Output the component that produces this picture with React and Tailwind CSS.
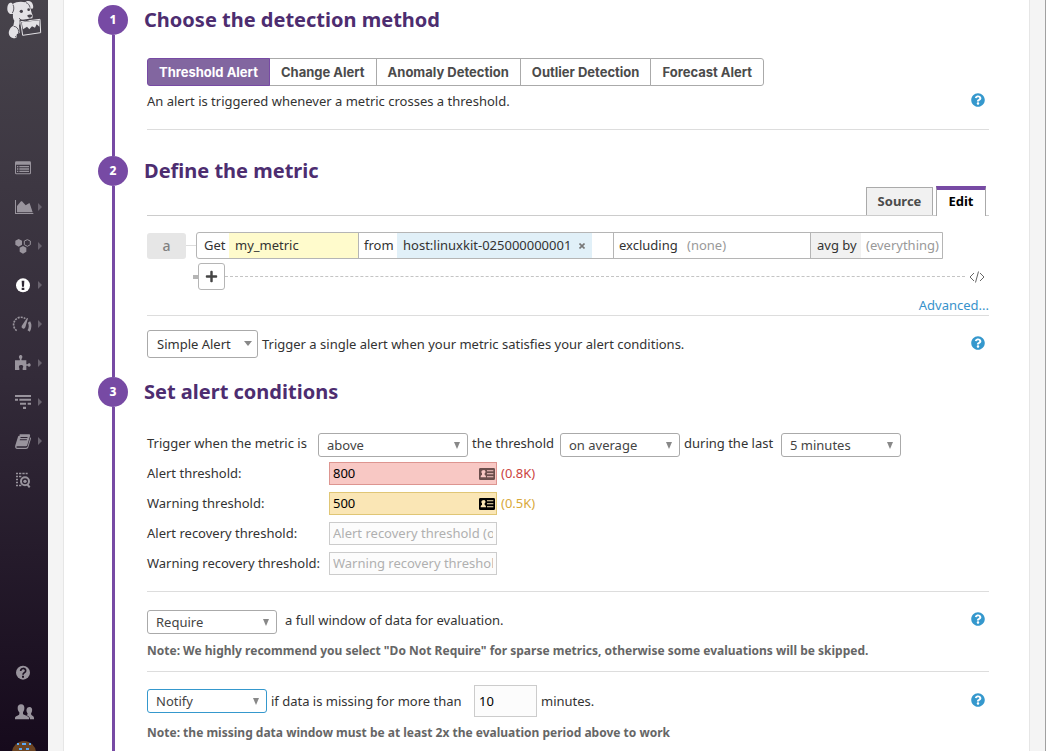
import React from "react";
import { FaPlus, FaQuestionCircle } from "react-icons/fa";

function NavSvg({ children }) {
  return (
    <svg viewBox="0 0 72 60" className="h-5 w-6 shrink-0" fill="currentColor" aria-hidden="true">
      {children}
    </svg>
  );
}

const DogLogo = () => (
  <svg viewBox="0 0 108 117" className="h-[39px] w-9" fill="#e3e1e5" aria-hidden="true">
    <path d="M20 12C30 5 46 4 58 7c3-5 12-6 18-1 5 6 7 14 5 19-3 3-6 0-8-2l4 16c3 5 4 11 2 16l-39 6c2 7 1 12-1 16l2 22-9 4c4 10-4 14-12 11C9 111 6 99 10 91c2-7 7-11 12-14l3-15c-4-5-5-13-4-21-6 3-12 1-15-6C2 28 4 12 11 9c4-2 7 0 9 3z" />
    <path d="M21 14c4 8 3 18-2 25M60 8c7 2 11 8 12 15" fill="none" stroke="#45414a" strokeWidth="2.500" />
    <path d="M44 65l58-7 2 40-54 8z" fill="#45414a" stroke="#e3e1e5" strokeWidth="3" />
    <path d="M47 67l53-6v19l-8-7-5 10-9-4-8 9-7-8-12 8z" />
    <circle cx="46" cy="34" r="5" fill="#45414a" />
    <circle cx="68" cy="29" r="4" fill="#45414a" />
    <path d="M64 46c4-3 11-4 14-1 1 5-3 8-7 8-4 0-7-3-7-7z" fill="#45414a" />
    <path d="M39 55c8 8 22 10 33 2" fill="none" stroke="#45414a" strokeWidth="3" />
    <path d="M23 79c9 0 15 8 15 16s-5 14-11 16" fill="none" stroke="#45414a" strokeWidth="2.500" />
  </svg>
);

const EventsIcon = () => (
  <NavSvg>
    <path fillRule="evenodd" d="M13 10h40a4 4 0 0 1 4 4v31a4 4 0 0 1-4 4H13a4 4 0 0 1-4-4V14a4 4 0 0 1 4-4zm-1 10v24a2 2 0 0 0 2 2h38a2 2 0 0 0 2-2V20z" />
    <path d="M15 24h4v4h-4zM22 24h29v4H22zM15 31h4v4h-4zM22 31h29v4H22zM15 38h4v4h-4zM22 38h29v4H22z" />
  </NavSvg>
);

const DashboardsIcon = () => (
  <NavSvg>
    <path d="M9 9h3v39h52v3H9z" />
    <path d="M15 46V27l12-14h3l11 12 10-6h2l9 27z" />
  </NavSvg>
);

const InfrastructureIcon = () => (
  <NavSvg>
    <path d="M20 9l10 5v12l-10 6-10-6V14zM33 30l10 5v12l-10 6-10-6V35z" />
    <path d="M46 11l9 4v11l-9 5-9-5V15z" fill="none" stroke="currentColor" strokeWidth="3" />
  </NavSvg>
);

const MonitorsIcon = () => (
  <NavSvg>
    <circle cx="33" cy="31" r="21" fill="#fff" />
    <path d="M29 17h8l-1 18h-6zM29 38h8v7h-8z" fill="#2e2733" />
  </NavSvg>
);

const MetricsIcon = () => (
  <NavSvg>
    <path d="M14 50a21 21 0 0 1 26-36" fill="none" stroke="currentColor" strokeWidth="5" strokeDasharray="6 3" />
    <path d="M51 24c5 9 4 18-1 27" fill="none" stroke="currentColor" strokeWidth="8" />
    <path d="M45 12l3 1-8 27a5 5 0 0 1-11-4z" />
  </NavSvg>
);

const IntegrationsIcon = () => (
  <NavSvg>
    <path d="M9 22h14c1-2 1-3 0-5-4-4-2-11 3-11s7 7 3 11c-1 2-1 3 0 5h14v12h4c2-5 9-4 9 2s-7 7-9 2h-4v13H32v-5c4-6 1-10-5-10s-8 4-5 10v5H9z" />
  </NavSvg>
);

const ApmIcon = () => (
  <NavSvg>
    <path d="M9 9h48v6H9zM9 20h9v6H9zM22 20h35v6H22zM24 32h18v6H24zM47 32h10v6H47zM33 44h9v7h-9z" />
  </NavSvg>
);

const NotebooksIcon = () => (
  <NavSvg>
    <path fillRule="evenodd" d="M23 10h27c4 0 5 2 4 5l-8 27c-1 3-3 4-6 4H16c-4 0-4 4-1 4h27c3 0 4-1 5-4l8-27c3 2 2 4 1 7l-7 23c-1 4-3 5-7 5H16c-6 0-8-5-6-11l8-26c1-2 2-3 5-3zm3 8-1 3h21l1-3zm-2 7-1 3h21l1-3z" />
  </NavSvg>
);

const LogsIcon = () => (
  <NavSvg>
    <path d="M12 8h6v5h-6zM21 8h7v5h-7zM31 8h7v5h-7zM41 8h6v5h-6zM12 17h6v5h-6zM21 17h7v5h-7zM12 26h6v5h-6zM12 35h6v5h-6zM12 44h6v5h-6zM21 44h7v5h-7z" />
    <circle cx="39" cy="34" r="12" fill="none" stroke="currentColor" strokeWidth="6" />
    <circle cx="39" cy="34" r="5" />
    <path d="M46 43l7 9" fill="none" stroke="currentColor" strokeWidth="6" />
  </NavSvg>
);

const HelpNavIcon = () => (
  <NavSvg>
    <circle cx="33" cy="29" r="21" />
    <path d="M26 24c0-10 15-10 15-1 0 6-8 6-8 12" fill="none" stroke="#1c1122" strokeWidth="5" />
    <path d="M30 38h6v6h-6z" fill="#1c1122" />
  </NavSvg>
);

const TeamIcon = () => (
  <NavSvg>
    <path d="M27 7c8 0 11 6 10 14-1 5-3 8-4 10v5c1 3 16 5 18 11v5H9v-5c2-5 13-7 13-11v-5c-3-3-5-7-5-13 0-7 4-11 10-11z" />
    <path d="M52 15c7 0 10 6 8 13-1 4-3 6-3 8 1 5 9 5 9 12v4H54c0-7-5-10-11-12 4-3 5-4 3-7-5-8-2-18 6-18z" />
  </NavSvg>
);

const NAV = [
  { label: "Events", Icon: EventsIcon },
  { label: "Dashboards", Icon: DashboardsIcon, sub: true },
  { label: "Infrastructure", Icon: InfrastructureIcon, sub: true },
  { label: "Monitors", Icon: MonitorsIcon, sub: true },
  { label: "Metrics", Icon: MetricsIcon, sub: true },
  { label: "Integrations", Icon: IntegrationsIcon, sub: true },
  { label: "APM", Icon: ApmIcon, sub: true },
  { label: "Notebooks", Icon: NotebooksIcon, sub: true },
  { label: "Logs", Icon: LogsIcon },
];

function NavLink({ label, Icon, sub }) {
  return (
    <a href="#" aria-label={label} className="flex h-[39px] items-center gap-[2px] pl-3 text-[#99949d]">
      <Icon />
      {sub && (
        <svg viewBox="0 0 4 8" className="h-2 w-1 shrink-0" fill="#69636e" aria-hidden="true">
          <path d="M0 0l4 4-4 4z" />
        </svg>
      )}
    </a>
  );
}

function Sidebar() {
  return (
    <nav className="sticky top-0 flex h-screen w-12 shrink-0 flex-col overflow-hidden bg-linear-to-b from-[#47434b] via-[#332b39] to-[#160a1c]">
      <a href="#" aria-label="Home" className="flex h-[148px] shrink-0 items-start justify-center">
        <DogLogo />
      </a>
      {NAV.map((item) => (
        <NavLink key={item.label} {...item} />
      ))}
      <div className="mt-auto shrink-0">
        <NavLink label="Help" Icon={HelpNavIcon} />
        <NavLink label="Team" Icon={TeamIcon} />
        <a href="#" aria-label="Account" className="flex h-5 items-start overflow-hidden pt-[10px] pl-3">
          <svg viewBox="0 0 24 24" className="h-6 w-6 shrink-0" aria-hidden="true">
            <circle cx="12" cy="12" r="12" fill="#6b4423" />
            <path d="M5 2h2v2H5zM10 2h4v2h-4zM17 2h2v2h-2zM7 7h3v2H7zM14 7h3v2h-3z" fill="#5aa9f5" />
          </svg>
        </a>
      </div>
    </nav>
  );
}

function Step({ number, title, last, children }) {
  return (
    <section className={last ? "flex grow" : "flex"}>
      <div className="flex w-[30px] shrink-0 flex-col items-center">
        <span className="flex size-[30px] shrink-0 items-center justify-center rounded-full bg-[#774aa4] text-[12px] font-extrabold text-white">
          {number}
        </span>
        <span className="w-[3px] grow bg-[#774aa4]" />
      </div>
      <div className="min-w-0 grow">
        <h2 className="pl-4 text-[20px] leading-[30px] font-bold text-[#4d2d70]">{title}</h2>
        <div className="pl-[19px]">{children}</div>
      </div>
    </section>
  );
}

function Help() {
  return (
    <button type="button" aria-label="Help" className="mr-1 ml-auto flex h-5 shrink-0 items-center pb-[2px] text-[#3598cd]">
      <FaQuestionCircle className="size-[14px]" />
    </button>
  );
}

function SelectBox({ label, value, className }) {
  return (
    <span className={`relative inline-flex h-6 shrink-0 ${className}`}>
      <select
        aria-label={label}
        className="h-full w-full appearance-none rounded-[3px] border border-inherit bg-white pr-5 pl-2 text-[13px] leading-5 text-[#444] outline-none"
      >
        <option>{value}</option>
      </select>
      <svg viewBox="0 0 6 7" className="pointer-events-none absolute top-[9px] right-2 h-[7px] w-[6px]" fill="#888" aria-hidden="true">
        <path d="M0 0h6L3 7z" />
      </svg>
    </span>
  );
}

function CardIcon({ className }) {
  return (
    <svg viewBox="0 0 48 36" className={`pointer-events-none absolute top-[6px] right-[2px] h-3 w-4 ${className}`} fill="currentColor" aria-hidden="true">
      <path
        fillRule="evenodd"
        d="M4 0h40a4 4 0 0 1 4 4v28a4 4 0 0 1-4 4H4a4 4 0 0 1-4-4V4a4 4 0 0 1 4-4zm8 7a5 5 0 0 0-3 9v5c-3 1-4 3-4 7h16c0-4-1-6-4-7v-5a5 5 0 0 0-5-9zm12 0v3h19V7zm0 9v3h19v-3zm0 9v3h19v-3z"
      />
    </svg>
  );
}

function ThresholdRow({ id, label, value, placeholder, inputClass, iconClass, note, noteClass }) {
  return (
    <div className="flex h-[30px] items-center">
      <label htmlFor={id} className="w-[182px] shrink-0 whitespace-nowrap">
        {label}
      </label>
      <span className="relative flex">
        <input
          id={id}
          type="text"
          defaultValue={value}
          placeholder={placeholder}
          className={`h-[23px] w-[168px] border px-[3px] text-[13px] outline-none placeholder:text-[#b0b0b0] ${inputClass}`}
        />
        {iconClass && <CardIcon className={iconClass} />}
      </span>
      {note && <span className={`ml-1 ${noteClass}`}>{note}</span>}
    </div>
  );
}

const METHODS = ["Threshold Alert", "Change Alert", "Anomaly Detection", "Outlier Detection", "Forecast Alert"];

function MethodPicker() {
  return (
    <div className="mt-[23px] flex h-7 font-[Inter,sans-serif] text-[13px] font-bold whitespace-nowrap">
      {METHODS.map((m, i) => (
        <button
          key={m}
          type="button"
          aria-pressed={i === 0}
          className={
            i === 0
              ? "z-10 rounded-l-[3px] border border-[#774aa4] bg-[#8266a0] px-[11px] text-white"
              : "-ml-px border border-[#aaa] bg-white px-[11px] text-[#4b4b4b] last:rounded-r-[3px]"
          }
        >
          {m}
        </button>
      ))}
    </div>
  );
}

function QueryEditor() {
  return (
    <div className="mt-4 flex items-center">
      <span className="flex h-[26px] w-[39px] shrink-0 items-center justify-center rounded-[3px] bg-[#e6e6e6] text-[14px] font-medium text-[#808080]">a</span>
      <span className="h-px w-[10px] shrink-0 bg-[#ddd]" />
      <div className="flex h-[27px] shrink-0 rounded-l-[3px] border border-[#b5b5b5] leading-[25px] whitespace-nowrap">
        <label htmlFor="metric" className="w-8 pl-[7px]">Get</label>
        <input id="metric" type="text" defaultValue="my_metric" className="w-[130px] border-r border-[#b5b5b5] bg-[#fffbcc] px-[6px] outline-none" />
        <span className="w-[38px] pl-[5px]">from</span>
        <span className="flex w-[195px] items-center bg-[#e1f0f8] pl-[6px]">
          host:linuxkit-025000000001
          <button type="button" aria-label="Remove host" className="ml-2 text-[#777]">
            <svg viewBox="0 0 6 6" className="size-[6px]" aria-hidden="true">
              <path d="M0.500 0.500l5 5M5.500 0.500l-5 5" stroke="currentColor" strokeWidth="1.600" />
            </svg>
          </button>
        </span>
        <span className="w-[22px] border-r border-[#b5b5b5]" />
        <label htmlFor="excluding" className="w-[67px] pl-[5px]">excluding</label>
        <input id="excluding" type="text" placeholder="(none)" className="w-[130px] border-r border-[#b5b5b5] px-[6px] outline-none placeholder:text-[#999]" />
        <label htmlFor="group" className="w-[50px] bg-[#f1f1f1] pl-[6px]">avg by</label>
        <input id="group" type="text" placeholder="(everything)" className="w-[81px] pl-[5px] outline-none placeholder:text-[#999]" />
      </div>
    </div>
  );
}

export default function App() {
  return (
    <div className="flex min-h-screen bg-[#f4f4f4] font-['Noto_Sans',sans-serif] text-[13px] leading-5 text-[#333]">
      <Sidebar />
      <div className="flex min-w-0 grow border-r border-[#a0a0a0] px-[15px]">
        <main className="flex min-w-0 grow flex-col border-x border-[#e6e6e6] bg-white pt-[5px] pr-10 pl-[34px]">
          <Step number="1" title="Choose the detection method">
            <MethodPicker />
            <div className="mt-[5px] flex">
              <p>An alert is triggered whenever a metric crosses a threshold.</p>
              <Help />
            </div>
            <hr className="mt-[18px] mb-[26px] border-[#ddd]" />
          </Step>

          <Step number="2" title="Define the metric">
            <div className="flex h-[30px] items-end justify-end gap-[3px] border-b border-[#ccc] pr-[3px] font-bold">
              <button type="button" className="h-7 w-[67px] border border-b-0 border-[#aaa] bg-[#f1f1f1] pb-[2px] text-[#4b4b4b]">
                Source
              </button>
              <button type="button" className="-mb-px h-[30px] w-[50px] border-x border-t-4 border-x-[#aaa] border-t-[#774aa4] bg-white pb-1 text-black">
                Edit
              </button>
            </div>
            <QueryEditor />
            <div className="mt-1 flex items-center pr-1 pl-[46px]">
              <span className="h-1 w-[5px] bg-[#b5b5b5]" />
              <button type="button" aria-label="Add query" className="flex size-[27px] items-center justify-center rounded-[3px] border border-[#b5b5b5] bg-white text-[#444]">
                <FaPlus className="size-[13px]" />
              </button>
              <span className="mr-1 grow border-t border-dashed border-[#c4c4c4]" />
              <button type="button" aria-label="Edit as code" className="text-[#666]">
                <svg viewBox="0 0 16 12" className="h-3 w-4" fill="none" stroke="currentColor" aria-hidden="true">
                  <path d="M5 2L1 6l4 4M11 2l4 4-4 4M9.500 0.500l-3 11" />
                </svg>
              </button>
            </div>
            <div className="mt-[5px] flex justify-end">
              <a href="#" className="text-[#3892cb]">Advanced...</a>
            </div>
            <hr className="border-[#ddd]" />
            <div className="mt-[14px] mb-[19px] flex h-7 items-center">
              <span className="relative mr-1 flex">
                <select aria-label="Alert grouping" className="h-7 w-[111px] appearance-none rounded-[3px] border border-[#aaa] bg-white pl-[9px] text-[13px] outline-none">
                  <option>Simple Alert</option>
                </select>
                <svg viewBox="0 0 8 5" className="pointer-events-none absolute top-[11px] right-[6px] h-[5px] w-2" fill="#888" aria-hidden="true">
                  <path d="M0 0h8L4 5z" />
                </svg>
              </span>
              <p>Trigger a single alert when your metric satisfies your alert conditions.</p>
              <Help />
            </div>
          </Step>

          <Step number="3" title="Set alert conditions" last>
            <div className="mt-[26px] flex items-start whitespace-nowrap">
              <span className="w-[171px]">Trigger when the metric is</span>
              <SelectBox label="Comparison" value="above" className="w-[150px] border-[#aaa]" />
              <span className="w-[92px] pl-1">the threshold</span>
              <SelectBox label="Aggregation" value="on average" className="w-[120px] border-[#aaa]" />
              <span className="w-[101px] pl-1">during the last</span>
              <SelectBox label="Window" value="5 minutes" className="w-[120px] border-[#aaa]" />
            </div>
            <div className="mt-px">
              <ThresholdRow id="alert" label="Alert threshold:" value="800" inputClass="border-[#dd9590] bg-[#f8c8c4] text-black" iconClass="text-[#6b4e4c]" note="(0.8K)" noteClass="text-[#cc4440]" />
              <ThresholdRow id="warning" label="Warning threshold:" value="500" inputClass="border-[#e0c675] bg-[#fae6b5] text-black" iconClass="text-black" note="(0.5K)" noteClass="text-[#d9a93a]" />
              <ThresholdRow id="alert-recovery" label="Alert recovery threshold:" placeholder="Alert recovery threshold (optional)" inputClass="border-[#ccc] bg-[#fcfcfc]" />
              <ThresholdRow id="warning-recovery" label="Warning recovery threshold:" placeholder="Warning recovery threshold (optional)" inputClass="border-[#ccc] bg-[#fcfcfc]" />
            </div>
            <hr className="mt-[13px] border-[#ddd]" />
            <div className="mt-[18px] flex items-start">
              <SelectBox label="Full window requirement" value="Require" className="w-[130px] border-[#aaa]" />
              <span className="ml-2">a full window of data for evaluation.</span>
              <Help />
            </div>
            <p className="mt-[7px] text-[12px] font-bold text-[#666]">
              Note: We highly recommend you select "Do Not Require" for sparse metrics, otherwise some evaluations will be skipped.
            </p>
            <hr className="mt-[10px] border-[#ddd]" />
            <div className="mt-[13px] flex h-8 items-center">
              <SelectBox label="Missing data" value="Notify" className="w-[120px] border-[#3598cd]" />
              <label htmlFor="missing" className="w-[207px] pl-1 whitespace-nowrap">if data is missing for more than</label>
              <input id="missing" type="text" defaultValue="10" className="h-8 w-[63px] border border-[#ccc] bg-[#fcfcfc] px-1 text-[13px] text-black outline-none" />
              <span className="ml-1">minutes.</span>
              <Help />
            </div>
            <p className="mt-[6px] text-[12px] font-bold text-[#666]">
              Note: the missing data window must be at least 2x the evaluation period above to work
            </p>
          </Step>
        </main>
      </div>
    </div>
  );
}
